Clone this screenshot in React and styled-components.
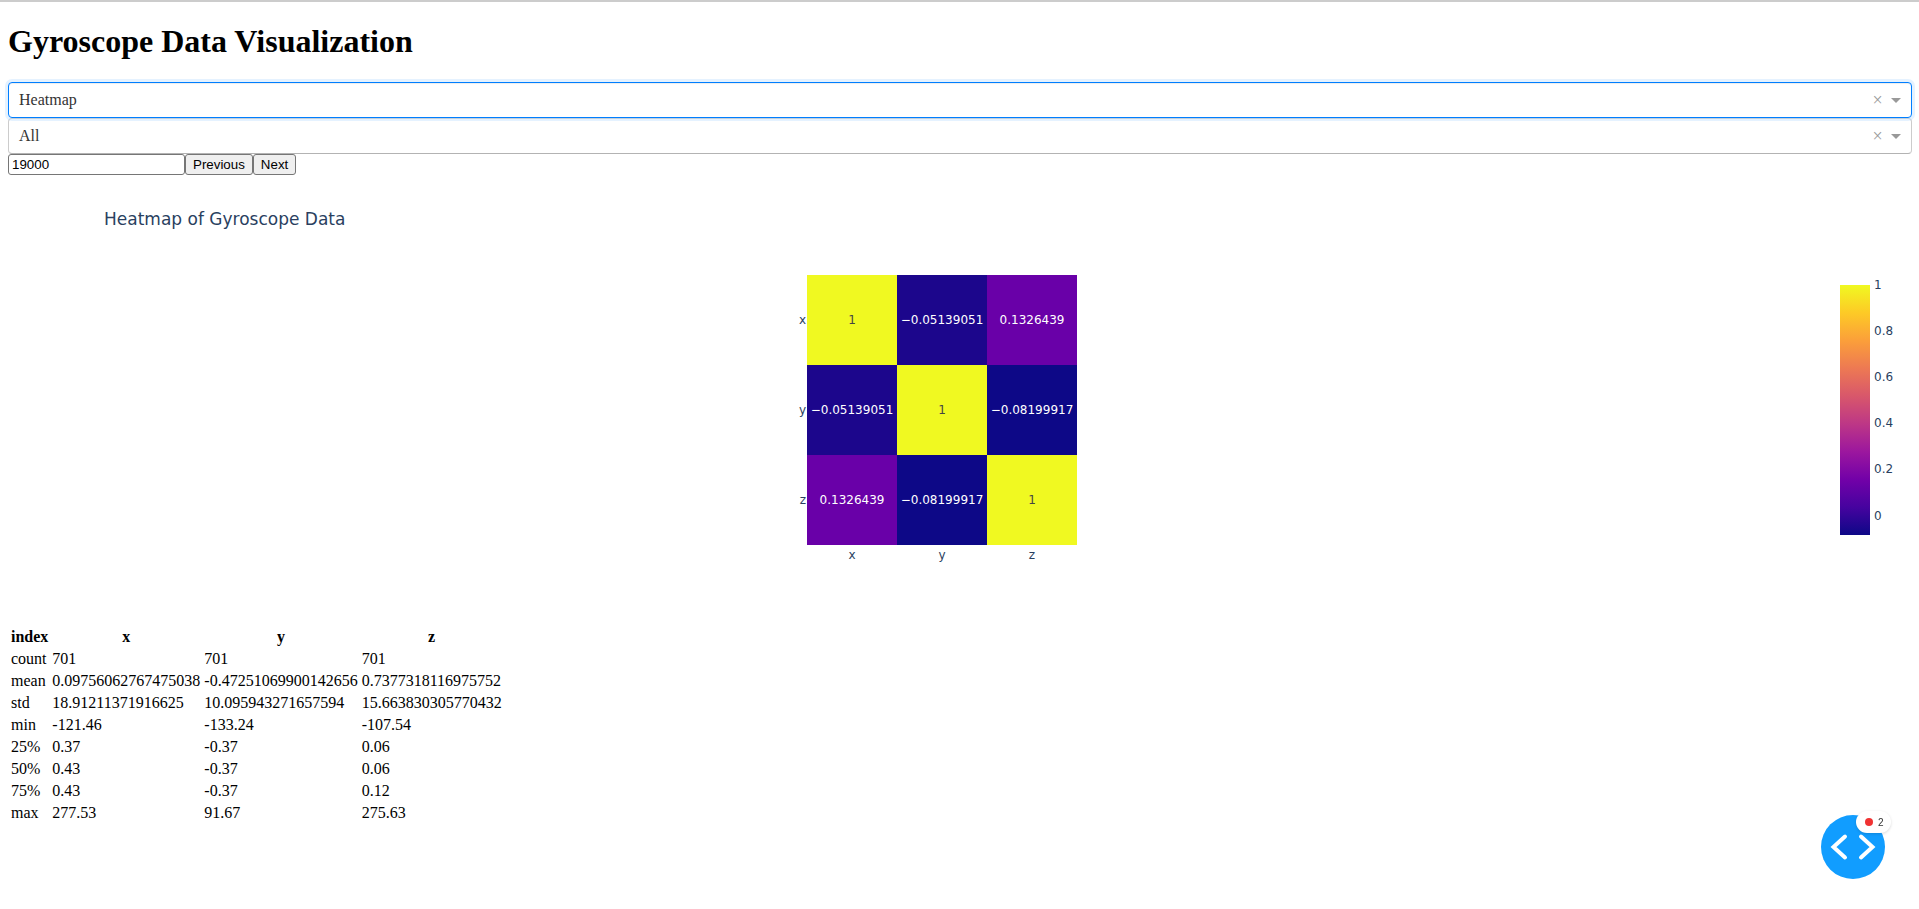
import React from "react";
import styled, { createGlobalStyle } from "styled-components";

const tableRows = [
  ["count", "701", "701", "701"],
  ["mean", "0.09756062767475038", "-0.47251069900142656", "0.7377318116975752"],
  ["std", "18.91211371916625", "10.095943271657594", "15.663830305770432"],
  ["min", "-121.46", "-133.24", "-107.54"],
  ["25%", "0.37", "-0.37", "0.06"],
  ["50%", "0.43", "-0.37", "0.06"],
  ["75%", "0.43", "-0.37", "0.12"],
  ["max", "277.53", "91.67", "275.63"],
];

const labels = ["x", "y", "z"];
const cells = [
  [
    { text: "1", fill: "#f0f921", color: "#444" },
    { text: "−0.05139051", fill: "#1c068c", color: "#fff" },
    { text: "0.1326439", fill: "#6900a8", color: "#fff" },
  ],
  [
    { text: "−0.05139051", fill: "#1c068c", color: "#fff" },
    { text: "1", fill: "#f0f921", color: "#444" },
    { text: "−0.08199917", fill: "#0d0887", color: "#fff" },
  ],
  [
    { text: "0.1326439", fill: "#6900a8", color: "#fff" },
    { text: "−0.08199917", fill: "#0d0887", color: "#fff" },
    { text: "1", fill: "#f0f921", color: "#444" },
  ],
];

const plasma = [
  "#0d0887",
  "#46039f",
  "#7201a8",
  "#9c179e",
  "#bd3786",
  "#d8576b",
  "#ed7953",
  "#fb9f3a",
  "#fdca26",
  "#f0f921",
];

const colorbarTicks = [
  ["1", 113.5],
  ["0.8", 159.7],
  ["0.6", 205.9],
  ["0.4", 252.1],
  ["0.2", 298.3],
  ["0", 344.5],
];

const CELL = 90;
const PLOT_X = 799;
const PLOT_Y = 100;

const Dropdown = ({ value, focused }) => (
  <SelectBox focused={focused}>
    <SelectValue>{value}</SelectValue>
    <ClearMark>×</ClearMark>
    <ArrowZone>
      <Arrow />
    </ArrowZone>
  </SelectBox>
);

const HeatmapChart = () => (
  <Chart width="1904" height="450">
    <defs>
      <linearGradient id="plasma" x1="0" y1="1" x2="0" y2="0">
        {plasma.map((color, i) => (
          <stop key={color} offset={`${(i / 9) * 100}%`} stopColor={color} />
        ))}
      </linearGradient>
    </defs>
    <ChartTitle x="96" y="50">
      Heatmap of Gyroscope Data
    </ChartTitle>
    {cells.map((row, r) =>
      row.map((cell, c) => (
        <g key={`${r}-${c}`}>
          <rect
            x={PLOT_X + c * CELL}
            y={PLOT_Y + r * CELL}
            width={CELL}
            height={CELL}
            fill={cell.fill}
          />
          <CellText
            x={PLOT_X + c * CELL + CELL / 2}
            y={PLOT_Y + r * CELL + 49}
            fill={cell.color}
          >
            {cell.text}
          </CellText>
        </g>
      ))
    )}
    {labels.map((label, i) => (
      <g key={label}>
        <AxisText
          x={PLOT_X + i * CELL + CELL / 2}
          y={PLOT_Y + 3 * CELL + 14}
          textAnchor="middle"
        >
          {label}
        </AxisText>
        <AxisText x={PLOT_X - 1} y={PLOT_Y + i * CELL + 49} textAnchor="end">
          {label}
        </AxisText>
      </g>
    ))}
    <rect x="1832" y="110" width="30" height="250" fill="url(#plasma)" />
    {colorbarTicks.map(([label, y]) => (
      <AxisText key={label} x="1866" y={y}>
        {label}
      </AxisText>
    ))}
  </Chart>
);

const App = () => (
  <>
    <GlobalStyle />
    <TopBar />
    <Page>
      <Title>Gyroscope Data Visualization</Title>
      <Dropdown value="Heatmap" focused />
      <Dropdown value="All" />
      <Pager>
        <PageInput defaultValue="19000" />
        <PageButton>Previous</PageButton>
        <PageButton>Next</PageButton>
      </Pager>
      <HeatmapChart />
      <table>
        <thead>
          <tr>
            <th>index</th>
            {labels.map(label => (
              <th key={label}>{label}</th>
            ))}
          </tr>
        </thead>
        <tbody>
          {tableRows.map(row => (
            <tr key={row[0]}>
              {row.map((value, i) => (
                <td key={i}>{value}</td>
              ))}
            </tr>
          ))}
        </tbody>
      </table>
    </Page>
    <DebugButton>
      <svg width="64" height="64" viewBox="0 0 64 64">
        <path
          d="M24 21.5 L12.5 32 L24 42.5 M40 21.5 L51.5 32 L40 42.5"
          fill="none"
          stroke="#fff"
          strokeWidth="4"
          strokeLinecap="round"
          strokeLinejoin="miter"
        />
      </svg>
      <ErrorBadge>
        <ErrorDot />2
      </ErrorBadge>
    </DebugButton>
  </>
);

const GlobalStyle = createGlobalStyle`
  body {
    margin: 0;
    background: #fff;
    color: #000;
    font-family: "Liberation Serif", serif;
  }
`;

const TopBar = styled.div`
  height: 2px;
  background: #ccc;
`;

const Page = styled.div`
  padding: 0 7px 8px 8px;
`;

const Title = styled.h1`
  margin: 21.44px 0;
  font-size: 32px;
  font-weight: bold;
`;

const SelectBox = styled.div`
  display: flex;
  align-items: center;
  height: 36px;
  box-sizing: border-box;
  padding-left: 10px;
  background: #fff;
  color: #333;
  font-size: 16px;
  border: 1px solid;
  border-color: ${props =>
    props.focused ? "#007eff" : "#d9d9d9 #ccc #b3b3b3"};
  border-radius: 4px;
  box-shadow: ${props =>
    props.focused
      ? "inset 0 1px 1px rgba(0, 0, 0, 0.075), 0 0 0 3px rgba(0, 126, 255, 0.1)"
      : "none"};
  position: relative;
  z-index: ${props => (props.focused ? 1 : 0)};
`;

const SelectValue = styled.div`
  flex: 1;
`;

const ClearMark = styled.span`
  width: 17px;
  text-align: center;
  color: #999;
  font-size: 18px;
  line-height: 1;
`;

const ArrowZone = styled.span`
  display: flex;
  justify-content: center;
  width: 25px;
  padding-right: 5px;
  box-sizing: border-box;
`;

const Arrow = styled.span`
  border-color: #999 transparent transparent;
  border-style: solid;
  border-width: 5px 5px 2.5px;
  margin-top: 3px;
`;

const Pager = styled.div`
  display: flex;
  height: 21px;
`;

const PageInput = styled.input`
  font-family: "Liberation Sans", sans-serif;
  font-size: 13.33px;
  width: 177px;
  height: 21px;
  box-sizing: border-box;
  padding: 1px 3px;
  border: 1px solid #767676;
  border-radius: 3px;
`;

const PageButton = styled.button`
  font-family: "Liberation Sans", sans-serif;
  font-size: 13.33px;
  height: 21px;
  padding: 1px 7px;
  color: #000;
  background: #efefef;
  border: 1px solid #767676;
  border-radius: 3px;
`;

const Chart = styled.svg`
  display: block;
  font-family: "DejaVu Sans", Verdana, sans-serif;
`;

const ChartTitle = styled.text`
  font-size: 17px;
  fill: #2a3f5f;
`;

const CellText = styled.text`
  font-size: 12px;
  text-anchor: middle;
`;

const AxisText = styled.text`
  font-size: 12px;
  fill: #2a3f5f;
`;

const DebugButton = styled.div`
  position: fixed;
  left: 1821px;
  top: 815px;
  width: 64px;
  height: 64px;
  border-radius: 50%;
  background: #119dff;
`;

const ErrorBadge = styled.div`
  position: absolute;
  left: 35px;
  top: -4px;
  width: 35px;
  height: 22px;
  box-sizing: border-box;
  display: flex;
  align-items: center;
  gap: 5px;
  padding-left: 9px;
  border-radius: 11px;
  background: #fff;
  box-shadow: 0 1px 3px rgba(0, 0, 0, 0.15);
  color: #333;
  font-family: "Liberation Sans", sans-serif;
  font-size: 10px;
`;

const ErrorDot = styled.span`
  width: 8px;
  height: 8px;
  border-radius: 50%;
  background: #f03232;
`;

export default App;
